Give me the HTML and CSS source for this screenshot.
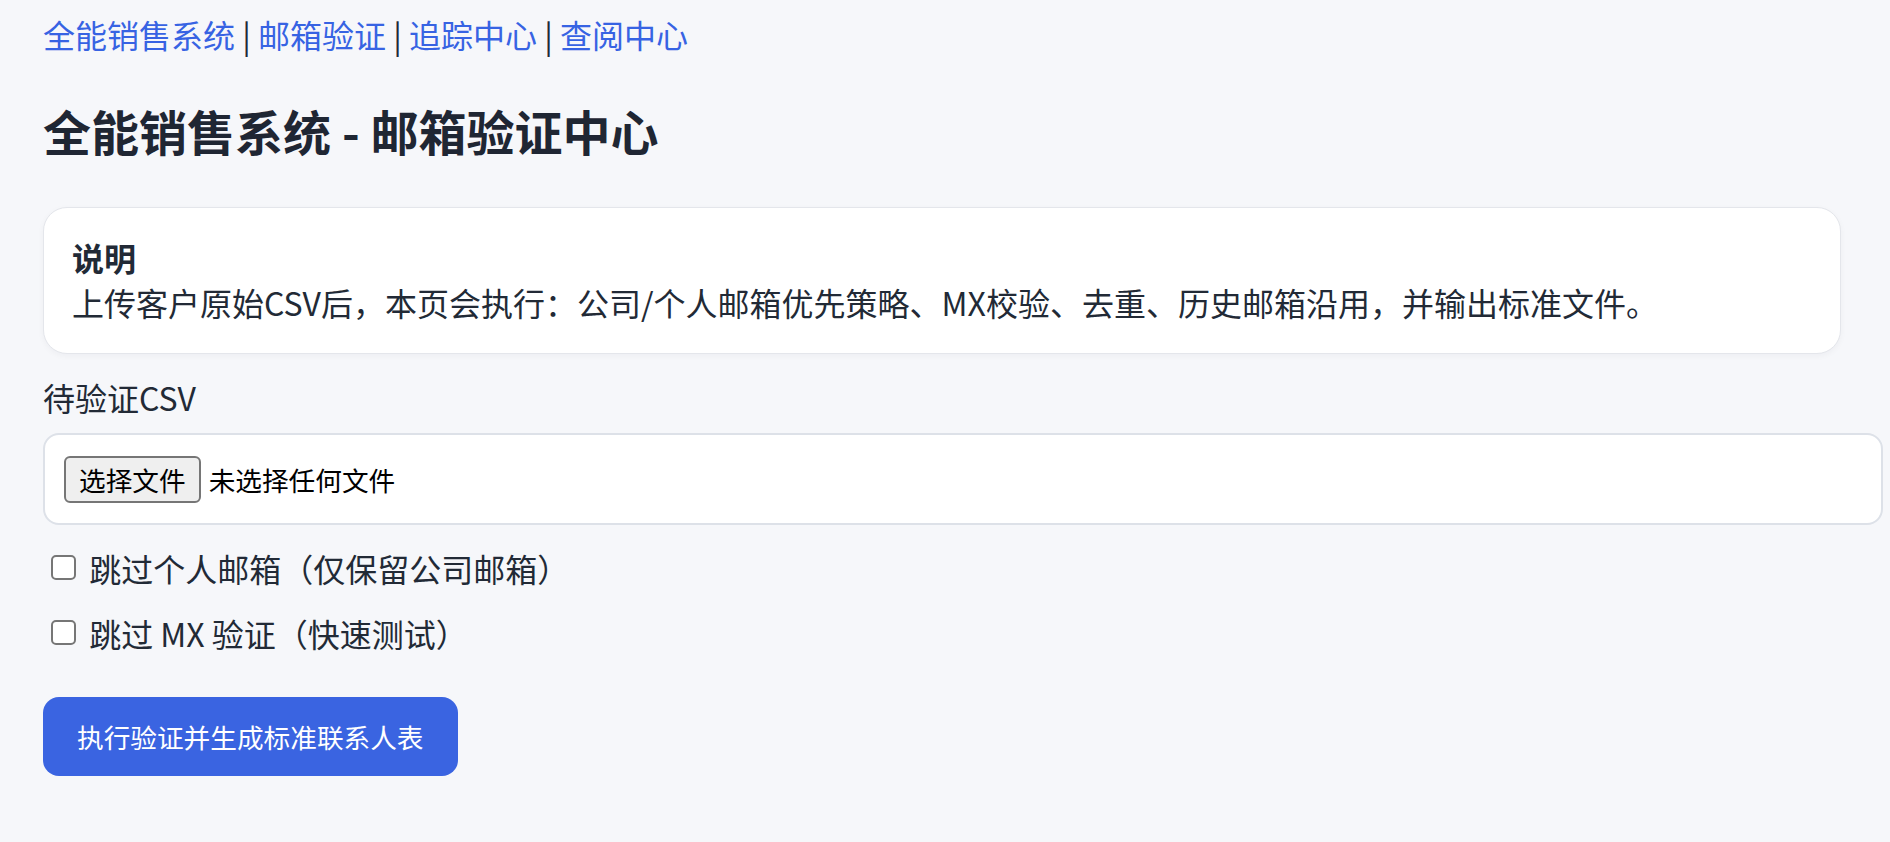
FILE: index.html
```html
<!DOCTYPE html>
<html lang="zh-CN">
<head>
<meta charset="utf-8">
<title>全能销售系统 - 邮箱验证中心</title>
<link rel="stylesheet" href="styles.css">
</head>
<body>
<div class="page">
  <nav class="nav">
    <a href="#">全能销售系统</a> | <a href="#">邮箱验证</a> | <a href="#">追踪中心</a> | <a href="#">查阅中心</a>
  </nav>
  <h1 class="title">全能销售系统 - 邮箱验证中心</h1>
  <div class="card">
    <div class="card-title">说明</div>
    <div class="card-text">上传客户原始CSV后，本页会执行：公司/个人邮箱优先策略、MX校验、去重、历史邮箱沿用，并输出标准文件。</div>
  </div>
  <form class="form">
    <div class="field-label">待验证CSV</div>
    <label class="file-box">
      <input class="file-input" type="file" accept=".csv">
      <span class="file-btn">选择文件</span>
      <span class="file-name">未选择任何文件</span>
    </label>
    <div class="options">
      <label class="check"><input type="checkbox" class="cb"> 跳过个人邮箱（仅保留公司邮箱）</label>
      <label class="check"><input type="checkbox" class="cb"> 跳过 MX 验证（快速测试）</label>
    </div>
    <button type="button" class="submit">执行验证并生成标准联系人表</button>
  </form>
</div>
</body>
</html>
```
FILE: styles.css
```css
html, body {
  margin: 0;
  background: #f6f7fa;
}
body {
  padding: 10px 43px 40px 43px;
  font-family: "Noto Sans CJK SC", "Noto Sans", sans-serif;
  font-size: 32px;
  color: #222a36;
}
.page {
  max-width: 1798px;
}
.nav {
  line-height: 48px;
  color: #222a36;
}
.nav a {
  color: #3763e3;
  text-decoration: none;
}
.title {
  margin: 40px 0 45px 0;
  font-size: 48px;
  line-height: 64px;
  font-weight: 700;
  color: #1f2633;
}
.card {
  background: #ffffff;
  border: 1px solid #e4e6eb;
  border-radius: 24px;
  padding: 27px 28px 28px 28px;
  line-height: 45px;
  box-shadow: 0 2px 6px rgba(20, 30, 60, 0.04);
}
.card-title {
  font-weight: 700;
}
.form {
  margin: 0;
}
.field-label {
  margin-top: 21px;
  line-height: 45px;
}
.file-box {
  display: flex;
  align-items: center;
  box-sizing: content-box;
  width: 100%;
  margin-top: 13px;
  padding: 21px 19px 20px 19px;
  background: #ffffff;
  border: 2px solid #dde1e8;
  border-radius: 16px;
  cursor: pointer;
}
.file-input {
  display: none;
}
.file-btn {
  display: inline-block;
  height: 43px;
  line-height: 43px;
  padding: 0 13px;
  background: #efefef;
  border: 2px solid #767676;
  border-radius: 6px;
  font-size: 26.67px;
  color: #000000;
}
.file-name {
  margin-left: 8px;
  font-size: 26.67px;
  color: #000000;
  line-height: 43px;
}
.options {
  display: flex;
  flex-direction: column;
  gap: 20px;
  margin-top: 20px;
}
.check {
  display: flex;
  align-items: center;
  height: 45px;
  white-space: pre;
}
.cb {
  appearance: none;
  -webkit-appearance: none;
  box-sizing: border-box;
  width: 25px;
  height: 25px;
  margin: 0 6px 0 8px;
  background: #ffffff;
  border: 2px solid #767676;
  border-radius: 5px;
}
.submit {
  display: block;
  margin-top: 42px;
  height: 79px;
  padding: 0 34px;
  background: #3a64e1;
  color: #ffffff;
  border: none;
  border-radius: 16px;
  font-family: "Noto Sans CJK SC", "Noto Sans", sans-serif;
  font-size: 26.67px;
  cursor: pointer;
}
```
